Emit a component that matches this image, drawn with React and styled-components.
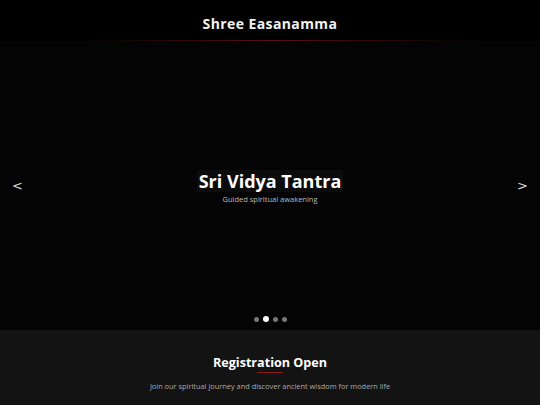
import styled, { createGlobalStyle } from 'styled-components';

const Global = createGlobalStyle`
    * { box-sizing: border-box; }
    body {
        margin: 0;
        background: #000;
        font-family: "Open Sans", "Lato", sans-serif;
        color: #fff;
    }
`
const Header = styled.header`
    height: 41px;
    display: flex;
    align-items: center;
    justify-content: center;
    background: #000;
    position: relative;
    &::after {
        content: "";
        position: absolute;
        left: 0;
        right: 0;
        bottom: 0;
        height: 1px;
        background: linear-gradient(90deg, transparent 15%, #5a1010 50%, transparent 90%);
    }
`
const Brand = styled.h1`
    margin: 0;
    font-size: 14px;
    font-weight: 700;
    letter-spacing: 0.4px;
    color: #f2f2f2;
    padding-top: 6px;
`
const Hero = styled.section`
    height: 289px;
    background: #040404;
    display: flex;
    align-items: center;
    justify-content: space-between;
    padding: 0 12px;
    position: relative;
`
const Arrow = styled.button`
    background: none;
    border: none;
    color: #ddd;
    font-family: "DejaVu Sans", sans-serif;
    font-size: 13px;
    padding: 0;
    cursor: pointer;
`
const Slide = styled.div`
    display: flex;
    flex-direction: column;
    align-items: center;
    gap: 2px;
    margin-top: 2px;
`
const SlideTitle = styled.h2`
    margin: 0;
    font-size: 18px;
    line-height: 22px;
    font-weight: 700;
    background: #0c0c0c;
    padding: 0 2px;
`
const SlideText = styled.p`
    margin: 0;
    font-size: 7.5px;
    color: #bbb;
`
const Dots = styled.div`
    position: absolute;
    bottom: 8px;
    left: 0;
    right: 0;
    display: flex;
    justify-content: center;
    align-items: center;
    gap: 4px;
`
const Dot = styled.span`
    width: ${p => p.$active ? 6 : 5}px;
    height: ${p => p.$active ? 6 : 5}px;
    border-radius: 50%;
    background: ${p => p.$active ? '#fff' : '#777'};
`
const Register = styled.section`
    background: #131313;
    height: 75px;
    display: flex;
    flex-direction: column;
    align-items: center;
    padding-top: 24px;
`
const RegTitle = styled.h3`
    margin: 0;
    font-size: 12.6px;
    line-height: 17px;
    font-weight: 700;
`
const Line = styled.div`
    width: 26px;
    height: 1px;
    background: #8e1a1a;
    margin: 1px 0 8px;
`
const RegText = styled.p`
    margin: 0;
    font-size: 7.4px;
    color: #aaa;
`

const App = () => {
    return (
        <>
            <Global />
            <Header>
                <Brand>Shree Easanamma</Brand>
            </Header>
            <Hero>
                <Arrow>&lt;</Arrow>
                <Slide>
                    <SlideTitle>Sri Vidya Tantra</SlideTitle>
                    <SlideText>Guided spiritual awakening</SlideText>
                </Slide>
                <Arrow>&gt;</Arrow>
                <Dots>
                    <Dot />
                    <Dot $active />
                    <Dot />
                    <Dot />
                </Dots>
            </Hero>
            <Register>
                <RegTitle>Registration Open</RegTitle>
                <Line />
                <RegText>Join our spiritual journey and discover ancient wisdom for modern life</RegText>
            </Register>
        </>
    )
}

export default App;
